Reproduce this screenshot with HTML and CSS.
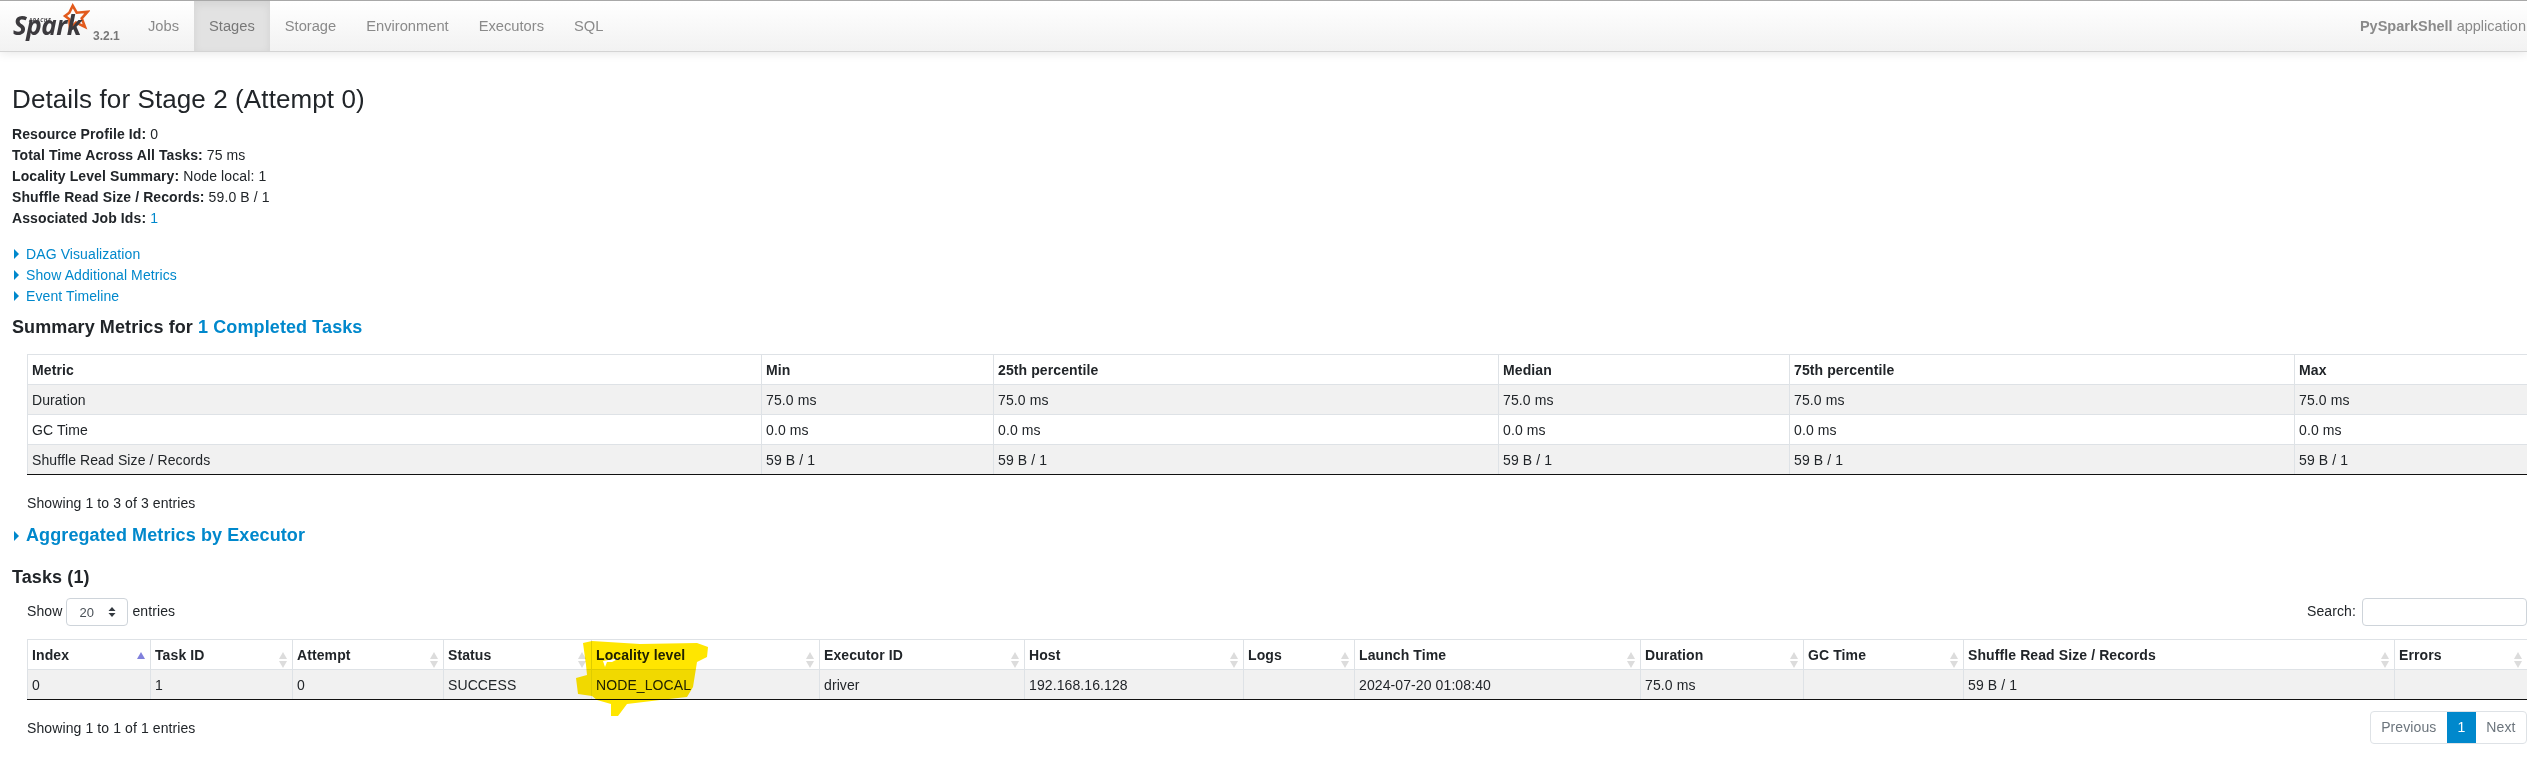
FILE: index.html
```html
<!DOCTYPE html>
<html>
<head>
  <meta charset="utf-8">
  <title>PySparkShell - Details for Stage 2 (Attempt 0)</title>
  <link rel="stylesheet" href="styles.css">
</head>
<body>
  <nav class="navbar">
    <a class="brand" href="#">
      <svg class="logo" width="80" height="44" viewBox="0 0 80 44">
        <path class="star" d="M62.7 4.7 L66.7 11.7 L77.7 10.7 L71.7 17.3 L75 26 L66 21.7 L60 28 L59.3 18.3 L55 15 L59.3 11.7 Z"/>
        <text class="logo-word" x="3" y="34">Spark</text>
        <text class="logo-apache" x="19" y="21">APACHE</text>
      </svg>
      <span class="version">3.2.1</span>
    </a>
    <ul class="nav-tabs">
      <li><a href="#">Jobs</a></li>
      <li class="active"><a href="#">Stages</a></li>
      <li><a href="#">Storage</a></li>
      <li><a href="#">Environment</a></li>
      <li><a href="#">Executors</a></li>
      <li><a href="#">SQL</a></li>
    </ul>
    <p class="app-name"><strong>PySparkShell</strong> application</p>
  </nav>

  <main class="content">
    <h3 class="page-title">Details for Stage 2 (Attempt 0)</h3>
    <ul class="stats">
      <li><strong>Resource Profile Id:</strong> 0</li>
      <li><strong>Total Time Across All Tasks:</strong> 75 ms</li>
      <li><strong>Locality Level Summary:</strong> Node local: 1</li>
      <li><strong>Shuffle Read Size / Records:</strong> 59.0 B / 1</li>
      <li><strong>Associated Job Ids:</strong> <a href="#">1</a></li>
    </ul>
    <ul class="toggles">
      <li><span class="arrow"></span><a href="#">DAG Visualization</a></li>
      <li><span class="arrow"></span><a href="#">Show Additional Metrics</a></li>
      <li><span class="arrow"></span><a href="#">Event Timeline</a></li>
    </ul>

    <h4 class="section-title summary-title">Summary Metrics for <a href="#">1 Completed Tasks</a></h4>
    <div class="table-wrap">
      <table class="metrics">
        <colgroup>
          <col class="m-1"><col class="m-2"><col class="m-3"><col class="m-4"><col class="m-5"><col class="m-6">
        </colgroup>
        <thead>
          <tr><th>Metric</th><th>Min</th><th>25th percentile</th><th>Median</th><th>75th percentile</th><th>Max</th></tr>
        </thead>
        <tbody>
          <tr><td>Duration</td><td>75.0 ms</td><td>75.0 ms</td><td>75.0 ms</td><td>75.0 ms</td><td>75.0 ms</td></tr>
          <tr><td>GC Time</td><td>0.0 ms</td><td>0.0 ms</td><td>0.0 ms</td><td>0.0 ms</td><td>0.0 ms</td></tr>
          <tr><td>Shuffle Read Size / Records</td><td>59 B / 1</td><td>59 B / 1</td><td>59 B / 1</td><td>59 B / 1</td><td>59 B / 1</td></tr>
        </tbody>
      </table>
      <div class="info summary-info">Showing 1 to 3 of 3 entries</div>
    </div>

    <h4 class="section-title aggregated-title"><span class="arrow"></span><a href="#">Aggregated Metrics by Executor</a></h4>
    <h4 class="section-title tasks-title">Tasks (1)</h4>

    <div class="table-wrap">
      <div class="table-controls">
        <label class="length">Show <span class="select">20<svg class="select-caret" width="8" height="12" viewBox="0 0 8 12"><path d="M4 1 L7.5 5 H0.5 Z M0.5 7 H7.5 L4 11 Z"/></svg></span> entries</label>
        <label class="search">Search: <input type="text"></label>
      </div>
      <table class="tasks">
        <colgroup>
          <col class="t-1"><col class="t-2"><col class="t-3"><col class="t-4"><col class="t-5"><col class="t-6"><col class="t-7"><col class="t-8"><col class="t-9"><col class="t-10"><col class="t-11"><col class="t-12"><col class="t-13">
        </colgroup>
        <thead>
          <tr>
            <th class="sort sort-asc">Index</th>
            <th class="sort">Task ID</th>
            <th class="sort">Attempt</th>
            <th class="sort">Status</th>
            <th class="sort">Locality level</th>
            <th class="sort">Executor ID</th>
            <th class="sort">Host</th>
            <th class="sort">Logs</th>
            <th class="sort">Launch Time</th>
            <th class="sort">Duration</th>
            <th class="sort">GC Time</th>
            <th class="sort">Shuffle Read Size / Records</th>
            <th class="sort">Errors</th>
          </tr>
        </thead>
        <tbody>
          <tr>
            <td>0</td><td>1</td><td>0</td><td>SUCCESS</td><td>NODE_LOCAL</td><td>driver</td><td>192.168.16.128</td><td></td><td>2024-07-20 01:08:40</td><td>75.0 ms</td><td></td><td>59 B / 1</td><td></td>
          </tr>
        </tbody>
      </table>
      <div class="table-footer">
        <div class="info">Showing 1 to 1 of 1 entries</div>
        <ul class="pagination">
          <li class="disabled"><a href="#">Previous</a></li>
          <li class="current"><a href="#">1</a></li>
          <li class="disabled"><a href="#">Next</a></li>
        </ul>
      </div>
    </div>
  </main>

  <!-- marker scribble over the locality column -->
  <svg class="scribble" width="300" height="145" viewBox="0 0 300 145">
    <path fill-rule="evenodd" d="M52 21 L100 24 L157 23 L168 27 L167 37 L157 42 L153 67 L147 77 L120 80 L87 84 L78 96 L71 96 L71 84 L57 80 L52 76 L38 74 L36 58 L47 55 L46 45 L43 23 Z M63 41 L80 38 L72 42 L67 42 L65 47 Z"/>
  </svg>
</body>
</html>
```
FILE: styles.css
```css
html, body {
  margin: 0;
  background: #fff;
}
body {
  position: relative;
  font-family: "Liberation Sans", Arial, sans-serif;
  font-size: 14px;
  letter-spacing: .1px;
  line-height: 21px;
  color: #212529;
}
a {
  color: #0088cc;
  text-decoration: none;
}
ul {
  list-style: none;
  margin: 0;
  padding: 0;
}

/* navbar */
.navbar {
  display: flex;
  align-items: stretch;
  height: 50px;
  border-top: 1px solid #a8a8a8;
  border-bottom: 1px solid #d4d4d4;
  background: linear-gradient(to bottom, #ffffff, #f2f2f2);
  box-shadow: 0 1px 10px rgba(0, 0, 0, .1);
}
.brand {
  display: flex;
  width: 133px;
  padding-left: 10px;
  box-sizing: border-box;
  letter-spacing: 0;
}
.logo {
  flex: none;
}
.star {
  fill: none;
  stroke: #e25a1c;
  stroke-width: 2.6;
}
.logo-word {
  font-family: "Open Sans", sans-serif;
  font-size: 26px;
  font-weight: 700;
  font-style: italic;
  letter-spacing: -.5px;
  fill: #3c3a3e;
}
.logo-apache {
  font-family: "Open Sans", sans-serif;
  font-size: 5px;
  font-weight: 700;
  font-style: italic;
  letter-spacing: .6px;
  fill: #3c3a3e;
}
.version {
  margin: 27px 0 0 3px;
  font-size: 12px;
  line-height: 16px;
  font-weight: 700;
  color: #777;
}
.nav-tabs {
  display: flex;
}
.nav-tabs a {
  display: block;
  padding: 0 15px;
  font-size: 14.7px;
  letter-spacing: 0;
  line-height: 50px;
  color: #8a8a8a;
}
.nav-tabs .active a {
  background: #e2e2e2;
  box-shadow: inset 0 3px 8px rgba(0, 0, 0, .07);
  color: #777;
}
.app-name {
  margin: 0 0 0 auto;
  padding-right: 1px;
  font-size: 14.5px;
  letter-spacing: 0;
  line-height: 50px;
  color: #8a8a8a;
}

/* page */
.content {
  padding: 0 0 0 12px;
}
.page-title {
  margin: 32px 0 0;
  font-size: 26px;
  font-weight: 500;
  line-height: 30px;
}
.stats {
  margin-top: 10px;
}
.toggles {
  margin-top: 15px;
  color: #0088cc;
}
.arrow {
  display: inline-block;
  width: 0;
  height: 0;
  margin: 0 7px 0 2px;
  border-top: 5px solid transparent;
  border-bottom: 5px solid transparent;
  border-left: 5px solid #0088cc;
}
.section-title {
  margin: 0;
  font-size: 18px;
  font-weight: 700;
  line-height: 22px;
}
.summary-title {
  margin-top: 9px;
}
.aggregated-title {
  margin-top: 10px;
}
.tasks-title {
  margin-top: 20px;
}

/* tables */
.table-wrap {
  padding-left: 15px;
}
.metrics {
  margin-top: 16px;
}
table {
  width: 2500px;
  table-layout: fixed;
  border-collapse: collapse;
}
th, td {
  height: 30px;
  padding: 2px 4px 0;
  border: 1px solid #dee2e6;
  text-align: left;
  vertical-align: middle;
  box-sizing: border-box;
}
th {
  font-weight: 700;
}
tbody tr:nth-child(odd) {
  background: #f1f1f1;
}
tbody tr:last-child td {
  border-bottom: 1px solid #111;
}
.m-1 { width: 734px; }
.m-2 { width: 232px; }
.m-3 { width: 505px; }
.m-4 { width: 291px; }
.m-5 { width: 505px; }
.m-6 { width: 233px; }

.t-1 { width: 123px; }
.t-2 { width: 142px; }
.t-3 { width: 151px; }
.t-4 { width: 148px; }
.t-5 { width: 228px; }
.t-6 { width: 205px; }
.t-7 { width: 219px; }
.t-8 { width: 111px; }
.t-9 { width: 286px; }
.t-10 { width: 163px; }
.t-11 { width: 160px; }
.t-12 { width: 431px; }
.t-13 { width: 133px; }

.sort {
  position: relative;
}
.sort::before, .sort::after {
  content: "";
  position: absolute;
  right: 5px;
  border-left: 4px solid transparent;
  border-right: 4px solid transparent;
}
.sort::before {
  top: 12px;
  border-bottom: 7px solid #dcdcdc;
}
.sort::after {
  top: 21px;
  border-top: 7px solid #dcdcdc;
}
.sort-asc::before {
  border-bottom-color: #8080dc;
}
.sort-asc::after {
  display: none;
}

.info {
  line-height: 21px;
}
.summary-info {
  margin-top: 18px;
}
.table-controls {
  display: flex;
  justify-content: space-between;
  align-items: center;
  height: 28px;
  margin: 10px 0 13px;
}
.select {
  display: inline-flex;
  align-items: center;
  justify-content: space-between;
  width: 62px;
  height: 28px;
  padding: 0 11px 0 12px;
  border: 1px solid #ced4da;
  border-radius: 4px;
  box-sizing: border-box;
  vertical-align: middle;
  font-size: 13px;
  color: #495057;
}
.select-caret {
  fill: #343a40;
}
.search input {
  width: 165px;
  height: 28px;
  margin-left: 2px;
  padding: 0;
  border: 1px solid #ced4da;
  border-radius: 4px;
  box-sizing: border-box;
  vertical-align: middle;
}
.table-footer {
  display: flex;
  justify-content: space-between;
  align-items: flex-start;
  margin-top: 11px;
}
.table-footer .info {
  margin-top: 7px;
}
.pagination {
  display: flex;
  border: 1px solid #dee2e6;
  border-radius: 4px;
  height: 33px;
  box-sizing: border-box;
}
.pagination a {
  display: block;
  padding: 0 10.5px;
  line-height: 31px;
  color: #6c757d;
}
.pagination .current a {
  background: #0088cc;
  color: #fff;
}

/* annotation */
.scribble {
  position: absolute;
  left: 540px;
  top: 620px;
  fill: #ffe600;
  mix-blend-mode: multiply;
  pointer-events: none;
}
```
